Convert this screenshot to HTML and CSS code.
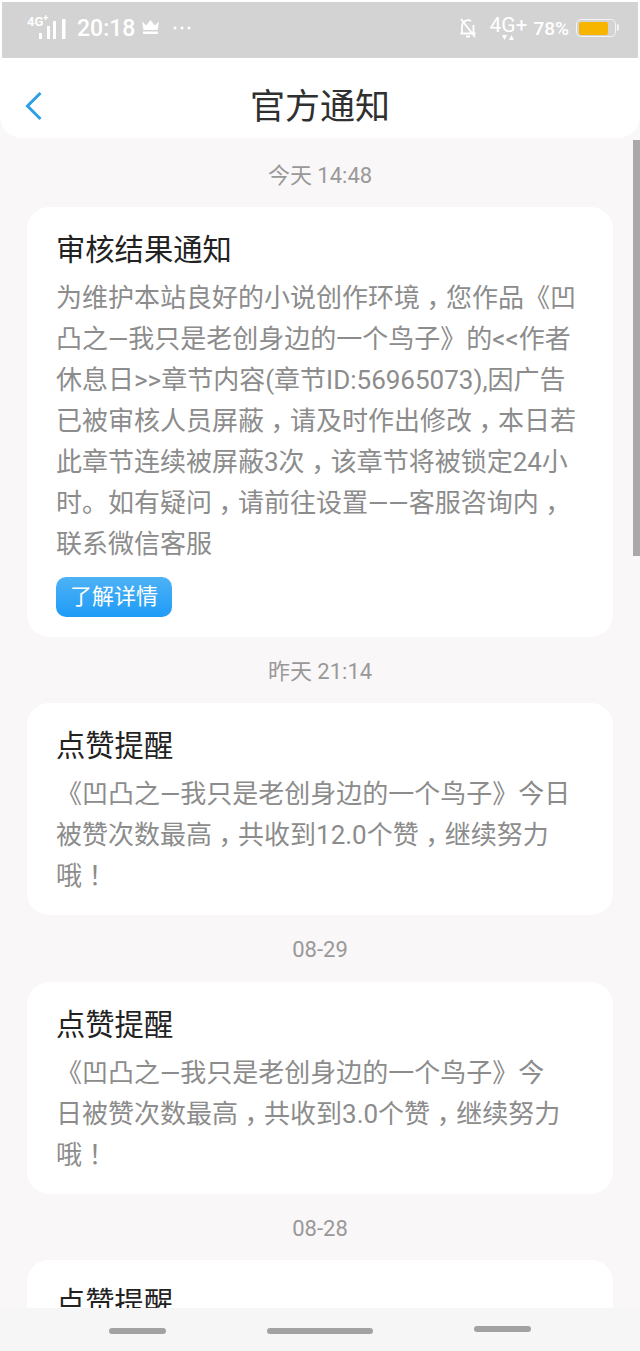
FILE: index.html
```html
<!DOCTYPE html>
<html lang="zh-CN">
<head>
    <meta charset="UTF-8">
    <title>官方通知</title>
    <link rel="stylesheet" href="styles.css">
</head>
<body>
<div class="screen">
    <div class="status-bar">
        <div class="status-left">
            <div class="signal-wrap">
                <span class="net-small">4G<sup>+</sup></span>
                <svg class="signal" width="27" height="20" viewBox="0 0 27 20">
                    <rect x="0" y="14" width="3" height="6" fill="#fff"/>
                    <rect x="8" y="7" width="3" height="13" fill="#fff"/>
                    <rect x="14" y="2" width="3" height="18" fill="#fff"/>
                    <rect x="23" y="0" width="3.500" height="20" fill="#fff"/>
                </svg>
            </div>
            <span class="clock">20:18</span>
            <svg class="crown" width="19" height="15" viewBox="0 0 19 15">
                <path d="M1 1.500l4.200 4L9.500 0l4.300 5.500 4.200-4-1.500 8.500h-14z" fill="#fff"/>
                <rect x="2" y="11.500" width="15" height="2.500" fill="#fff"/>
            </svg>
            <svg class="dots" width="18" height="4" viewBox="0 0 18 4">
                <circle cx="2" cy="2" r="1.500" fill="#fff"/>
                <circle cx="9" cy="2" r="1.500" fill="#fff"/>
                <circle cx="16" cy="2" r="1.500" fill="#fff"/>
            </svg>
        </div>
        <div class="status-right">
            <svg class="bell" width="20" height="22" viewBox="0 0 20 22">
                <path d="M4 16V9a6 6 0 0 1 9-5M15.500 8v8M2.500 16.500h15M8 19.500h4M3 2l14 18" fill="none" stroke="#fff" stroke-width="1.800"/>
            </svg>
            <div class="net-big">
                <span>4G+</span>
                <svg width="14" height="6" viewBox="0 0 14 6">
                    <path d="M1 0h5L3.500 5zM8 5h5l-2.500-5z" fill="#fff"/>
                </svg>
            </div>
            <span class="percent">78%</span>
            <div class="battery"><div class="battery-fill"></div></div>
        </div>
    </div>

    <div class="header">
        <svg class="back" width="20" height="32" viewBox="0 0 20 32">
            <path d="M16.500 3L3.500 16l13 13" fill="none" stroke="#2c9fe6" stroke-width="3"/>
        </svg>
        <div class="header-title">官方通知</div>
    </div>

    <div class="list">
        <div class="time">今天 14:48</div>
        <div class="card">
            <div class="card-title">审核结果通知</div>
            <div class="card-text">为维护本站良好的小说创作环境<span class="punct">，</span>您作品《凹<br>凸之—我只是老创身边的一个鸟子》的&lt;&lt;作者<br>休息日&gt;&gt;章节内容(章节ID:56965073),因广告<br>已被审核人员屏蔽<span class="punct">，</span>请及时作出修改<span class="punct">，</span>本日若<br>此章节连续被屏蔽3次<span class="punct">，</span>该章节将被锁定24小<br>时。如有疑问<span class="punct">，</span>请前往设置——客服咨询内<span class="punct">，</span><br>联系微信客服</div>
            <div class="more-btn">了解详情</div>
        </div>

        <div class="time">昨天 21:14</div>
        <div class="card">
            <div class="card-title">点赞提醒</div>
            <div class="card-text">《凹凸之—我只是老创身边的一个鸟子》今日<br>被赞次数最高<span class="punct">，</span>共收到12.0个赞<span class="punct">，</span>继续努力<br>哦<span class="punct">！</span></div>
        </div>

        <div class="time">08-29</div>
        <div class="card">
            <div class="card-title">点赞提醒</div>
            <div class="card-text">《凹凸之—我只是老创身边的一个鸟子》今<br>日被赞次数最高<span class="punct">，</span>共收到3.0个赞<span class="punct">，</span>继续努力<br>哦<span class="punct">！</span></div>
        </div>

        <div class="time">08-28</div>
        <div class="card">
            <div class="card-title">点赞提醒</div>
        </div>

        <div class="scrollbar"></div>
    </div>

    <div class="nav-bar">
        <div class="nav-line"></div>
        <div class="nav-line nav-line-long"></div>
        <div class="nav-line nav-line-up"></div>
    </div>
</div>
</body>
</html>
```

FILE: styles.css
```css
* {
    box-sizing: border-box;
}
body {
    margin: 0;
    font-family: Roboto, "Noto Sans CJK SC", sans-serif;
    background-color: #f9f7f8;
}
.screen {
    position: relative;
    display: flex;
    flex-direction: column;
    width: 640px;
    height: 1351px;
    overflow: hidden;
    background-color: #f9f7f8;
}

/* status bar */
.status-bar {
    display: flex;
    justify-content: space-between;
    align-items: center;
    flex: none;
    height: 58px;
    padding: 0 22px 4px 25px;
    background-color: #d3d3d3;
    border: solid #fff;
    border-width: 2px 2px 0;
    color: #fff;
}
.status-left,
.status-right {
    display: flex;
    align-items: center;
}
.signal-wrap {
    position: relative;
    width: 39px;
    height: 22px;
}
.net-small {
    position: absolute;
    left: 0;
    top: -2px;
    font-size: 13px;
    font-weight: 700;
    line-height: 14px;
}
.net-small sup {
    font-size: 9px;
    line-height: 0;
}
.signal {
    position: absolute;
    right: 0;
    bottom: 0;
}
.clock {
    margin-left: 11px;
    font-size: 23px;
    font-weight: 500;
}
.crown {
    margin: -1px 0 0 6px;
}
.dots {
    margin-left: 13px;
}
.bell {
    margin-right: 11px;
}
.net-big {
    display: flex;
    flex-direction: column;
    align-items: center;
    margin-right: 6px;
    font-size: 21px;
    line-height: 20px;
}
.percent {
    margin-right: 7px;
    font-size: 19px;
    font-weight: 500;
}
.battery {
    position: relative;
    width: 40px;
    height: 18px;
    padding: 1.500px;
    border: 1.500px solid #f4f4f4;
    border-radius: 5px;
}
.battery::after {
    content: "";
    position: absolute;
    right: -4px;
    top: 4px;
    width: 2px;
    height: 7px;
    background-color: #f4f4f4;
    border-radius: 0 2px 2px 0;
}
.battery-fill {
    width: 29px;
    height: 100%;
    background-color: #f8b500;
    border-radius: 2px;
}

/* header */
.header {
    position: relative;
    display: flex;
    align-items: center;
    justify-content: center;
    flex: none;
    height: 80px;
    padding-top: 10px;
    background-color: #fff;
    border-radius: 0 0 22px 22px;
}
.back {
    position: absolute;
    left: 24px;
    top: 32px;
}
.header-title {
    font-size: 35px;
    color: #303030;
}

/* list */
.list {
    position: relative;
    flex: 1;
    min-height: 0;
    overflow: hidden;
    padding: 2.700px 27px 0;
}
.time {
    height: 66.300px;
    padding-top: 3px;
    font-size: 22px;
    line-height: 63px;
    text-align: center;
    color: #999;
}
.card {
    padding: 22px 30px 18px 29px;
    background-color: #fff;
    border-radius: 22px;
}
.card-title {
    font-size: 29.300px;
    line-height: 42px;
    color: #222;
}
.card-text {
    margin-top: 7px;
    font-size: 26px;
    line-height: 41px;
    white-space: nowrap;
    color: #8c8c8c;
}
/* punctuation sits in the middle of its cell on this phone font */
.punct {
    padding: 0 0.25em;
    font-feature-settings: "halt";
}
.more-btn {
    width: 116px;
    height: 40px;
    margin: 12px 0 2px;
    font-size: 22px;
    line-height: 40px;
    text-align: center;
    color: #fff;
    background: linear-gradient(#4db2f5, #1f9bf7);
    border-radius: 10px;
}
.scrollbar {
    position: absolute;
    top: 2px;
    right: 0;
    width: 7px;
    height: 416px;
    background-color: #a9a9a9;
}

/* bottom nav */
.nav-bar {
    display: flex;
    align-items: center;
    gap: 101px;
    flex: none;
    height: 43px;
    padding: 2px 0 0 109px;
    background-color: #f6f6f6;
}
.nav-line {
    flex: none;
    width: 57px;
    height: 6px;
    background-color: #a2a2a2;
    border-radius: 3px;
}
.nav-line-long {
    width: 106px;
}
.nav-line-up {
    margin-top: -4px;
}
```
